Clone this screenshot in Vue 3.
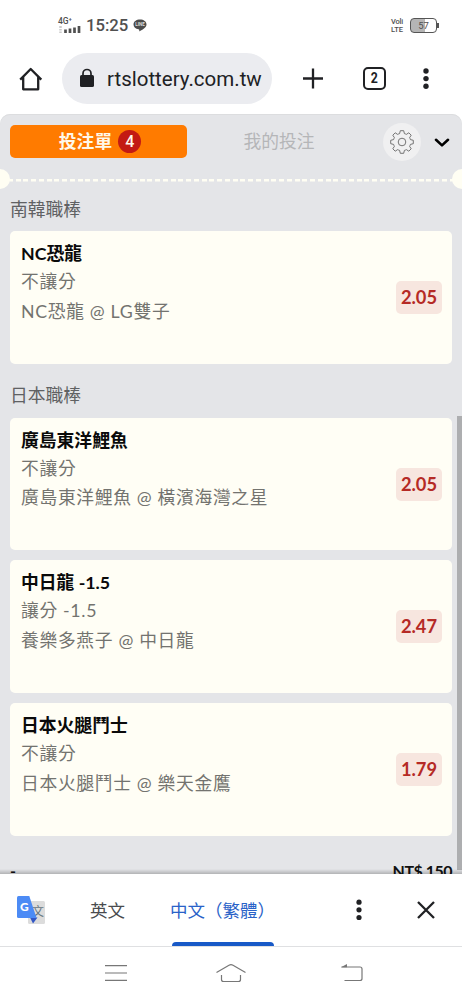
<script setup>
const leagues = [
  {
    name: '南韓職棒',
    bets: [{ pick: 'NC恐龍', type: '不讓分', match: 'NC恐龍 @ LG雙子', odds: '2.05' }],
  },
  {
    name: '日本職棒',
    bets: [
      { pick: '廣島東洋鯉魚', type: '不讓分', match: '廣島東洋鯉魚 @ 橫濱海灣之星', odds: '2.05' },
      { pick: '中日龍 -1.5', type: '讓分 -1.5', match: '養樂多燕子 @ 中日龍', odds: '2.47' },
      { pick: '日本火腿鬥士', type: '不讓分', match: '日本火腿鬥士 @ 樂天金鷹', odds: '1.79' },
    ],
  },
]
</script>

<template>
  <div class="screen">
    <header class="status">
      <div class="signal">
        <span class="net">4G⁺</span>
        <svg width="24" height="9" viewBox="0 0 24 9">
          <path d="M3.500 1v2M3.500 4v1.500M3.500 6.500v1.500" stroke="#ccc" stroke-width="2.500" />
          <path d="M8.500 4.500v3.500M13 3.500v4.500M17.500 2.500v5.500M22 1v7" stroke="#505050" stroke-width="2.700" />
        </svg>
      </div>
      <span class="clock">15:25</span>
      <div class="line-app">
        <svg width="14" height="13" viewBox="0 0 14 13">
          <path d="M7 .5C3.300.5.500 2.600.500 5.400c0 2.500 2.200 4.300 5 4.800.9.200.8.700.8 2 .4.200 5.300-2.800 6.300-4.300.6-.8.900-1.600.9-2.500C13.500 2.600 10.700.5 7 .5Z" fill="#4c4c4c" />
        </svg>
        <span>LINE</span>
      </div>
      <div class="volte"><span class="vo">Voli</span><span>LTE</span></div>
      <div class="battery"><span>57</span></div>
    </header>

    <div class="toolbar">
      <svg class="home" width="26" height="26" viewBox="0 0 26 26" fill="none" stroke="#202124" stroke-width="2.300" stroke-linejoin="round">
        <path d="M2.200 13.600 12.700 3 23.300 13.600M5.200 11v12.300h15V11" />
      </svg>
      <div class="url">
        <svg width="16" height="20" viewBox="0 0 16 20">
          <path d="M4 8V5.500a4 4 0 0 1 8 0V8" fill="none" stroke="#202124" stroke-width="1.700" />
          <rect x="1" y="7" width="14" height="12" rx="1.600" fill="#202124" />
        </svg>
        <span>rtslottery.com.tw</span>
      </div>
      <svg class="plus" width="22" height="22" viewBox="0 0 22 22" stroke="#202124" stroke-width="2.300">
        <path d="M1 10.500h20M11 .5v20" />
      </svg>
      <div class="tabs-count"><span>2</span></div>
      <svg class="dots" width="8" height="24" viewBox="0 0 8 24" fill="#202124">
        <circle cx="4" cy="4" r="2.700" /><circle cx="4" cy="11.600" r="2.700" /><circle cx="4" cy="19.300" r="2.700" />
      </svg>
    </div>

    <main class="slip">
      <div class="tabs">
        <div class="tab active">投注單<span class="count">4</span></div>
        <div class="tab">我的投注</div>
        <div class="gear">
          <svg width="24" height="24" viewBox="-12 -12 24 24" fill="none" stroke="#666" stroke-width=".9" stroke-linejoin="round">
            <path d="M-1.700-11.300H1.700L2.400-8.400Q3.500-8.100 4.300-7.600L6.800-9.200 9.200-6.800 7.600-4.300Q8.100-3.500 8.400-2.400L11.300-1.700V1.700L8.400 2.400Q8.100 3.500 7.600 4.300L9.200 6.800 6.800 9.200 4.300 7.600Q3.500 8.100 2.400 8.400L1.700 11.300H-1.700L-2.400 8.400Q-3.500 8.100-4.300 7.600L-6.800 9.200-9.200 6.800-7.600 4.300Q-8.100 3.500-8.400 2.400L-11.300 1.700V-1.700L-8.400-2.400Q-8.100-3.500-7.600-4.300L-9.200-6.800-6.800-9.200-4.300-7.600Q-3.500-8.100-2.400-8.400Z" />
            <circle r="3.800" />
          </svg>
        </div>
        <svg class="chevron" width="16" height="10" viewBox="0 0 16 10" fill="none" stroke="#000" stroke-width="2.600" stroke-linecap="round" stroke-linejoin="round">
          <path d="M2 1.800 8 7.400l6-5.600" />
        </svg>
      </div>
      <div class="perforation"></div>

      <section v-for="league in leagues" :key="league.name">
        <h2>{{ league.name }}</h2>
        <article v-for="bet in league.bets" :key="bet.match">
          <div class="info">
            <h3>{{ bet.pick }}</h3>
            <p>{{ bet.type }}</p>
            <p class="match">{{ bet.match }}</p>
          </div>
          <span class="odds">{{ bet.odds }}</span>
        </article>
      </section>
      <div class="total"><span>-</span><span>NT$ 150</span></div>
      <div class="scroll"></div>
    </main>

    <div class="translate">
      <div class="gt">
        <svg width="30" height="30" viewBox="0 0 30 30">
          <rect x="12" y="6" width="17" height="23" rx="1.500" fill="#dcdcdc" />
          <path d="M14 22.500h7.500L17 28.500Z" fill="#3257c5" />
        </svg>
        <span class="wen">文</span>
        <svg class="sheet" width="30" height="30" viewBox="0 0 30 30">
          <path d="M2.500 1h10.800L20.500 23H2.500Q1 23 1 21.500v-19Q1 1 2.500 1Z" fill="#4c8bf5" />
        </svg>
        <span class="g">G</span>
      </div>
      <div class="lang">英文</div>
      <div class="lang selected">中文（繁體）</div>
      <svg class="more" width="8" height="24" viewBox="0 0 8 24" fill="#202124">
        <circle cx="4" cy="4.200" r="2.600" /><circle cx="4" cy="11.800" r="2.600" /><circle cx="4" cy="19.500" r="2.600" />
      </svg>
      <svg class="close" width="20" height="20" viewBox="0 0 20 20" stroke="#202124" stroke-width="2.300">
        <path d="M2 2l16 16M18 2 2 18" />
      </svg>
    </div>

    <nav class="system">
      <svg width="22" height="18" viewBox="0 0 22 18" stroke="#777" stroke-width="1.200">
        <path d="M0 1.700h22M0 9h22M0 16.300h22" />
      </svg>
      <svg class="nav-home" width="32" height="20" viewBox="0 0 32 20" fill="none" stroke="#777" stroke-width="1.200" stroke-linejoin="round">
        <path d="M1.500 9.500 14 2.200q2-1.100 4 0L30.500 9.500M6.500 12v4.500q0 2 2 2h15q2 0 2-2v-4.500" />
      </svg>
      <svg width="24" height="20" viewBox="0 0 24 20" fill="none" stroke="#777" stroke-width="1.200">
        <path d="M1.500 4H20q2 0 2 2v9.500q0 2-2 2H4.500" /><path d="M1 4.300 7 1v3.300Z" fill="#777" stroke="none" />
      </svg>
    </nav>
  </div>
</template>

<style>
body { background: #fff; }
</style>

<style scoped>
* { box-sizing: border-box; }
.screen {
  width: 462px;
  height: 1000px;
  display: flex;
  flex-direction: column;
  overflow: hidden;
  background: #fff;
  font-family: Lato, "Noto Sans CJK TC", sans-serif;
}
svg { display: block; flex: none; }
.status {
  height: 44px;
  padding: 17px 25px 0 57px;
  display: flex;
  align-items: flex-start;
  font-family: Roboto, sans-serif;
  color: #505050;
}
.signal { width: 29px; }
.signal svg { margin-top: -1px; }
.net { display: block; padding-left: 1px; font-size: 8.500px; line-height: 9px; font-weight: 500; }
.clock { width: 47px; font-size: 16.700px; line-height: 17px; font-weight: 500; }
.line-app { position: relative; margin-top: 2px; }
.line-app span {
  position: absolute;
  left: 0;
  top: 3px;
  width: 14px;
  text-align: center;
  font-size: 4.500px;
  line-height: 5px;
  font-weight: 700;
  color: #ddd;
}
.volte {
  margin-left: auto;
  margin-top: 1px;
  width: 14px;
  font-size: 7.500px;
  line-height: 7.500px;
  display: flex;
  flex-direction: column;
  font-weight: 500;
}
.vo { letter-spacing: -.2px; }
.battery {
  position: relative;
  margin-top: 1px;
  margin-left: 5px;
  width: 27px;
  height: 15px;
  border: 1.300px solid #555;
  border-radius: 4px;
  background: linear-gradient(90deg, #b5b5b5 57%, #fff 57%);
  font-size: 9.500px;
  line-height: 13px;
  text-align: center;
}
.battery::after {
  content: "";
  position: absolute;
  right: -3px;
  top: 4px;
  width: 2px;
  height: 5px;
  background: #555;
}
.toolbar {
  height: 70px;
  padding: 9px 32px 10px 18px;
  display: flex;
  align-items: center;
}
.url {
  margin-left: 18px;
  width: 210px;
  height: 51px;
  border-radius: 26px;
  padding-left: 17px;
  background: #ebecf0;
  display: flex;
  align-items: center;
  font: 20.500px/24px Roboto, sans-serif;
  color: #202124;
}
.url svg { margin: -2px 12px 0 0; }
.plus { margin-left: 30px; }
.tabs-count {
  margin-left: 39px;
  width: 23px;
  height: 23px;
  border: 2.300px solid #202124;
  border-radius: 5px;
  font: 700 15px/19px Roboto, sans-serif;
  text-align: center;
  color: #202124;
}
.tabs-count span { display: inline-block; transform: scaleX(.82); }
.dots { margin-left: auto; }
.slip {
  position: relative;
  height: 760px;
  flex: none;
  padding: 11px 10px 0;
  overflow: hidden;
  background: #e4e5e8;
  border-radius: 10px 10px 0 0;
  box-shadow: inset 0 1px 0 #dcdddf;
}
.slip::after {
  content: "";
  position: absolute;
  left: 0;
  right: 0;
  bottom: 0;
  height: 5px;
  background: linear-gradient(rgba(0, 0, 0, 0), rgba(0, 0, 0, .22));
}
.tabs { height: 33px; display: flex; align-items: center; }
.tab {
  width: 177px;
  height: 33px;
  flex: none;
  display: flex;
  align-items: center;
  justify-content: center;
  font-size: 17.800px;
  line-height: 33px;
  color: #b5b6b8;
}
.tab.active { padding-left: 3px; background: #ff7b00; border-radius: 5px; color: #fff8ea; font-weight: 700; }
.tab:nth-child(2) { width: 184px; }
.count {
  margin-left: 6px;
  width: 23px;
  height: 23px;
  border-radius: 50%;
  background: #c31a13;
  font: 500 16px/23px Roboto, sans-serif;
  text-align: center;
}
.gear {
  width: 38px;
  height: 38px;
  flex: none;
  margin-left: 12px;
  border-radius: 50%;
  background: #f0f0f1;
  display: grid;
  place-items: center;
}
.chevron { margin-left: 13px; margin-top: 2px; }
.perforation {
  position: relative;
  height: 20px;
  margin: 11px -10px 0;
  background: repeating-linear-gradient(90deg, #fffef3 0 5px, transparent 5px 7.750px) 8px 10px / 100% 2.500px no-repeat;
}
.perforation::before,
.perforation::after {
  content: "";
  position: absolute;
  top: 0;
  width: 20px;
  height: 20px;
  border-radius: 50%;
  background: #fffef3;
}
.perforation::before { left: -10px; }
.perforation::after { right: -10px; }
h2 {
  margin: 0;
  font-size: 17.800px;
  line-height: 30px;
  font-weight: 400;
  color: #606163;
}
section:nth-of-type(1) h2 { height: 42px; padding-top: 5px; }
section:nth-of-type(2) h2 { height: 54px; padding-top: 16.500px; }
article {
  height: 132.500px;
  padding: 8px 10px 0 11px;
  display: flex;
  justify-content: space-between;
  background: #fffef5;
  border-radius: 5px;
}
article + article { margin-top: 10.400px; }
h3 { margin: 0; font-size: 17.800px; line-height: 28px; font-weight: 700; color: #0a0a0a; }
p { margin: 0; font-size: 17.800px; line-height: 28px; letter-spacing: .66px; color: #73736f; }
.match { margin-top: 1.500px; }
.odds {
  margin-top: 42px;
  width: 46px;
  height: 33px;
  border-radius: 5px;
  background: #f7e6df;
  font-size: 18.300px;
  line-height: 33px;
  font-weight: 700;
  text-align: center;
  color: #b52a25;
}
.total {
  display: flex;
  justify-content: space-between;
  padding-top: 23px;
  font-size: 16px;
  line-height: 24px;
  letter-spacing: -.5px;
  font-weight: 700;
  color: #111;
}
.scroll {
  position: absolute;
  right: 0;
  top: 302px;
  width: 5px;
  height: 454px;
  background: #adaeb0;
}
.translate {
  height: 73px;
  flex: none;
  padding: 0 26px 0 16px;
  border-bottom: 1px solid #dfe0e2;
  display: flex;
  align-items: center;
}
.gt { position: relative; width: 30px; height: 30px; }
.gt span { position: absolute; line-height: 14px; }
.sheet { position: absolute; left: 0; top: 0; }
.g { left: 4px; top: 5px; font-size: 12px; font-weight: 900; color: #fff; }
.wen { left: 16px; top: 10px; font-size: 12px; color: #66757f; }
.lang {
  height: 72px;
  margin-left: 44px;
  width: 36px;
  font-size: 17.500px;
  line-height: 73px;
  color: #494b4e;
  white-space: nowrap;
}
.lang.selected {
  position: relative;
  margin-left: 44px;
  width: 106px;
  color: #2962c8;
}
.lang.selected::after {
  content: "";
  position: absolute;
  left: 2px;
  right: 2px;
  bottom: 0;
  height: 4px;
  border-radius: 4px 4px 0 0;
  background: #1859c7;
}
.more { margin-left: 79px; }
.close { margin-left: auto; }
.system {
  height: 53px;
  display: flex;
  align-items: center;
  padding: 0 0 2px 105px;
}
.nav-home { margin: 0 109px 0 88px; }
.system svg:last-child { margin-left: -16px; }
</style>
